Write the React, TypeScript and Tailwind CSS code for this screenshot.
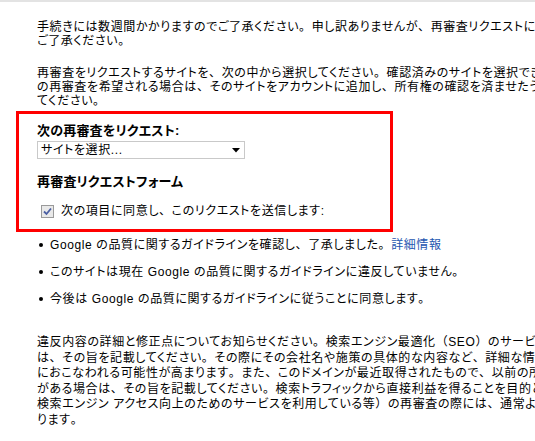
import React from 'react';

const font = "font-['Liberation_Sans','Noto_Sans_CJK_JP',sans-serif] [font-feature-settings:'palt'] tracking-[0.6px]";

// keep Japanese punctuation full width (the page's font draws them that way)
function J({ text }: { text: string }) {
  const parts = text.split(/([、。（）])/);
  return (
    <>
      {parts.map((p, i) =>
        /^[、。（）]$/.test(p) ? (
          <span key={i} className="[font-feature-settings:normal]">
            {p}
          </span>
        ) : (
          <React.Fragment key={i}>{p}</React.Fragment>
        )
      )}
    </>
  );
}

const intro1 = [
  '手続きには数週間かかりますのでご了承ください。申し訳ありませんが、再審査リクエストについての個別のお問い合わせにはお答えできませんので',
  'ご了承ください。',
];

const intro2 = [
  '再審査をリクエストするサイトを、次の中から選択してください。確認済みのサイトを選択できます。リストにないサイト',
  'の再審査を希望される場合は、そのサイトをアカウントに追加し、所有権の確認を済ませたうえでリクエストを送信し',
  'てください。',
];

const details = [
  '違反内容の詳細と修正点についてお知らせください。検索エンジン最適化（SEO）のサービスを利用していた場合',
  'は、その旨を記載してください。その際にその会社名や施策の具体的な内容など、詳細な情報を記載すると審査が迅速',
  'におこなわれる可能性が高まります。また、このドメインが最近取得されたもので、以前の所有者による違反の可能性',
  'がある場合は、その旨を記載してください。検索トラフィックから直接利益を得ることを目的としたサイト（オンライン',
  '検索エンジン アクセス向上のためのサービスを利用している等）の再審査の際には、通常より時間がかかる場合があ',
  'ります。',
];

function Lines({ lines, leading }: { lines: string[]; leading: string }) {
  return (
    <div className={`pl-[37px] text-[12px] ${leading} text-black`}>
      {lines.map((l, i) => (
        <div key={i} className="whitespace-nowrap">
          <J text={l} />
        </div>
      ))}
    </div>
  );
}

function Bullet({ children }: { children: React.ReactNode }) {
  return (
    <li className="flex items-center h-[14px] whitespace-nowrap">
      <span className="ml-[39px] mr-[7px] w-[4px] h-[4px] rounded-full bg-black shrink-0" />
      <span>{children}</span>
    </li>
  );
}

export default function App() {
  return (
    <div className={`w-[535px] h-[441px] overflow-hidden bg-white text-black ${font}`}>
      <div className="h-[2px] bg-[#e3e3e3]" />

      <div className="mt-[18px]">
        <Lines lines={intro1} leading="leading-[14px]" />
      </div>
      <div className="mt-[18px]">
        <Lines lines={intro2} leading="leading-[14px]" />
      </div>

      {/* request box */}
      <div className="mt-[3px] ml-[16px] w-[377px] border-[3px] border-[#ff0000] pl-[18px] pt-[10px] pb-[11px]">
        <div className="text-[13px] font-bold leading-[14px] tracking-[0.2px] whitespace-nowrap">
          次の再審査をリクエスト:
        </div>
        <div className="mt-[3px] w-[208px] h-[18px] border border-[#c9c9c9] bg-white flex items-center justify-between pl-[3px] pr-[4px]">
          <span className="text-[12px] leading-[14px]">サイトを選択...</span>
          <svg width="8" height="5" viewBox="0 0 8 5">
            <path d="M0 0H8L4 4.5Z" fill="#000" />
          </svg>
        </div>
        <div className="mt-[16px] text-[13px] font-bold leading-[14px] tracking-[0.2px] whitespace-nowrap">
          再審査リクエストフォーム
        </div>
        <label className="mt-[15px] flex items-center h-[14px] text-[12px] whitespace-nowrap">
          <span className="ml-[4px] mr-[7px] w-[13px] h-[13px] border border-[#9a9a9a] bg-[#e9e9e9] flex items-center justify-center">
            <svg width="9" height="9" viewBox="0 0 9 9">
              <path d="M1 4.5L3.5 7L8 1.5" fill="none" stroke="#4b5fa3" strokeWidth="1.8" />
            </svg>
          </span>
          <J text="次の項目に同意し、このリクエストを送信します:" />
        </label>
      </div>

      <ul className="mt-[6px] text-[12px] leading-[14px] flex flex-col gap-[13px]">
        <Bullet>
          <J text="Google の品質に関するガイドラインを確認し、了承しました。" />
          <a className="text-[#2456b0]">詳細情報</a>
        </Bullet>
        <Bullet>
          <J text="このサイトは現在 Google の品質に関するガイドラインに違反していません。" />
        </Bullet>
        <Bullet>
          <J text="今後は Google の品質に関するガイドラインに従うことに同意します。" />
        </Bullet>
      </ul>

      <div className="mt-[29px]">
        <Lines lines={details} leading="leading-[15.5px]" />
      </div>
    </div>
  );
}
